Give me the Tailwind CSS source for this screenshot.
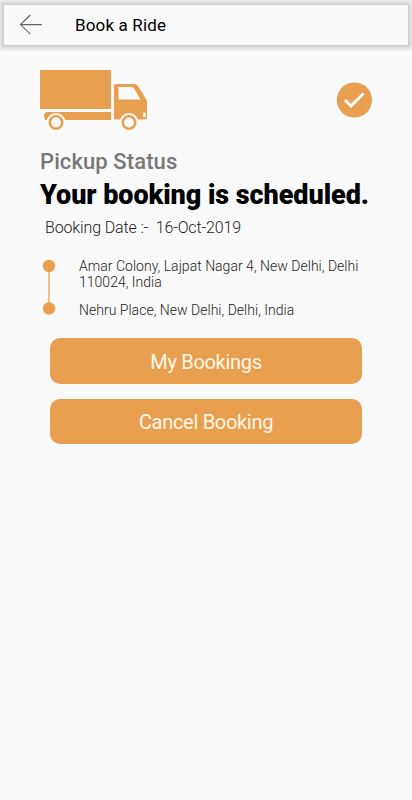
<!DOCTYPE html>
<html lang="en">
<head>
<meta charset="utf-8">
<meta name="viewport" content="width=device-width, initial-scale=1">
<title>Book a Ride</title>
<script src="https://cdn.jsdelivr.net/npm/@tailwindcss/browser@4"></script>
</head>
<body class="min-h-screen overflow-hidden bg-[#fafafa] font-[Roboto,sans-serif] text-black">
<header class="mx-1 mt-[5px] flex h-10 items-center bg-[#fafafa] shadow-[0_0_0_1px_#cdcdcd,0_0_4px_4px_#d4d4d4]">
  <svg class="ml-[15px] h-6 w-6" viewBox="0 0 24 24" fill="none" stroke="#62606e" stroke-width="1.1"><path d="M22.700 11.600H1.500M11.300 2 1.500 11.600 11.300 21.200"/></svg>
  <h1 class="ml-8 text-[17px] leading-6 tracking-[0.15px] whitespace-nowrap">Book a Ride</h1>
</header>
<main class="px-10 pt-[25px]">
  <div class="flex h-[60px] items-center justify-between">
    <svg class="h-[60px] w-[108px]" viewBox="0 0 108 60" fill="#e99f50">
      <path d="M0 0h71v39H0zM8 42h63v8H5c0-2-1-2-1-4q0-4 4-4z"/>
      <path fill-rule="evenodd" d="M76 14h18q3 0 4.500 3l7.500 12q1 1.500 1 3v15q0 2.500-2.500 2.500H74V16q0-2 2-2zM78.500 17v12.500h22L94 18.500q-1-1.500-3-1.500z"/>
      <g stroke="#fafafa" stroke-width="2"><circle cx="16" cy="52.500" r="8.500"/><circle cx="89" cy="52.500" r="8.500"/></g>
      <g fill="#fafafa"><circle cx="16" cy="52.500" r="4.900"/><circle cx="89" cy="52.500" r="4.900"/><rect x="103" y="42.500" width="2.600" height="4.800" rx="1"/></g>
    </svg>
    <svg class="h-9 w-9" viewBox="0 0 36 36"><circle cx="18.400" cy="18" r="17.600" fill="#e99f50"/><path d="m9 18 6 6L27.500 11.500" fill="none" stroke="#fff" stroke-width="3"/></svg>
  </div>
  <p class="mt-4 text-[22px] leading-[31px] font-medium tracking-[0.1px] whitespace-nowrap text-[#777]">Pickup Status</p>
  <h2 class="mt-[2px] text-[27px] leading-8 font-black tracking-[-0.06px] whitespace-nowrap">Your booking is scheduled.</h2>
  <p class="mt-[7px] ml-[5px] text-[16px] leading-5 font-light tracking-[-0.13px] whitespace-pre text-[#222]">Booking Date :-  16-Oct-2019</p>
  <div class="mt-5 flex">
    <svg class="ml-[2px] h-[58px] w-[14px]" viewBox="0 0 14 58" fill="#e99f50"><path d="M7 8v42" stroke="#efb87e" stroke-width="1.700"/><circle cx="7" cy="8" r="6.200"/><circle cx="7" cy="50.500" r="6.200"/></svg>
    <div class="ml-[23px] text-[14px] leading-4 font-light tracking-[0.02px] whitespace-nowrap text-[#222]">
      <p>Amar Colony, Lajpat Nagar 4, New Delhi, Delhi<br>110024, India</p>
      <p class="mt-3">Nehru Place, New Delhi, Delhi, India</p>
    </div>
  </div>
  <div class="mx-[10px] mt-5 flex flex-col gap-[15px] text-[20px] tracking-[-0.3px] text-[#fff8e8]">
    <button class="h-[45.500px] rounded-[10px] bg-[#e99f50] pt-0.5">My Bookings</button>
    <button class="h-[45.500px] rounded-[10px] bg-[#e99f50] pt-px">Cancel Booking</button>
  </div>
</main>
</body>
</html>
